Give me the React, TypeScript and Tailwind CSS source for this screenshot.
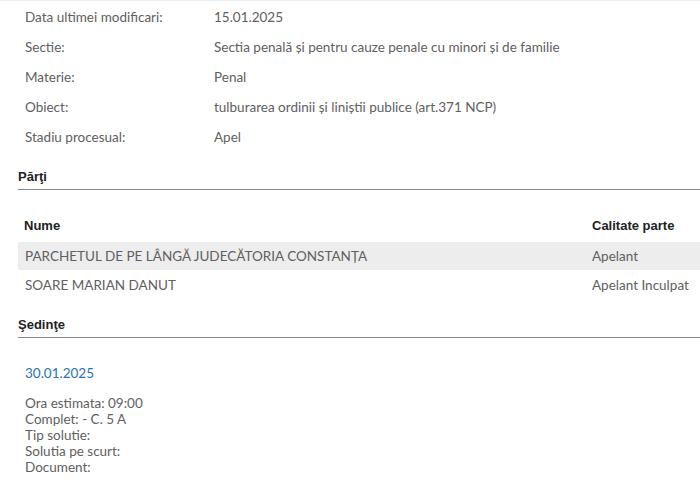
import React from "react";

const details = [
  { label: "Data ultimei modificari:", value: "15.01.2025" },
  { label: "Sectie:", value: "Sectia penală și pentru cauze penale cu minori și de familie" },
  { label: "Materie:", value: "Penal" },
  { label: "Obiect:", value: "tulburarea ordinii și liniștii publice (art.371 NCP)" },
  { label: "Stadiu procesual:", value: "Apel" },
];

const parti = [
  { nume: "PARCHETUL DE PE LÂNGĂ JUDECĂTORIA CONSTANȚA", calitate: "Apelant" },
  { nume: "SOARE MARIAN DANUT", calitate: "Apelant Inculpat" },
];

const light = { fontFamily: "Lato, 'Open Sans', sans-serif" };
const bold = { fontFamily: "'Liberation Sans', Arial, sans-serif" };

const SectionTitle = ({ title }: { title: string }) => (
  <div className="ml-[18px] border-b border-[#8a8a8a] pb-[4px]">
    <p className="text-[13px] leading-[16px] font-bold text-[#222]" style={bold}>
      {title}
    </p>
  </div>
);

export default function App() {
  return (
    <main className="w-[700px] h-[489px] bg-white overflow-hidden text-[#606060] text-[13.5px]" style={light}>
      <div className="border-t border-[#ececec] pt-[1px]">
        {details.map((d) => (
          <div key={d.label} className="flex items-center h-[30px]">
            <span className="w-[214px] pl-[25px]">{d.label}</span>
            <span>{d.value}</span>
          </div>
        ))}
      </div>

      <div className="mt-[17px]">
        <SectionTitle title="Părţi" />
      </div>

      <div className="ml-[18px] mt-[20px]">
        <div className="flex items-center h-[32px] px-[6px] text-[13px] font-bold text-[#222]" style={bold}>
          <span className="flex-1">Nume</span>
          <span className="w-[102px]">Calitate parte</span>
        </div>
        {parti.map((p, i) => (
          <div
            key={p.nume}
            className={`flex items-center px-[7px] ${i === 0 ? "h-[28px] bg-[#ededed]" : "h-[30px]"}`}
          >
            <span className="flex-1">{p.nume}</span>
            <span className="w-[101px]">{p.calitate}</span>
          </div>
        ))}
      </div>

      <div className="mt-[17px]">
        <SectionTitle title="Şedinţe" />
      </div>

      <div className="pl-[25px] mt-[27px]">
        <p className="leading-[16px] text-[#2a72b5]">30.01.2025</p>
        <div className="mt-[14px] leading-[16px]">
          <p>Ora estimata: 09:00</p>
          <p>Complet: - C. 5 A</p>
          <p>Tip solutie:</p>
          <p>Solutia pe scurt:</p>
          <p>Document:</p>
        </div>
      </div>
    </main>
  );
}
